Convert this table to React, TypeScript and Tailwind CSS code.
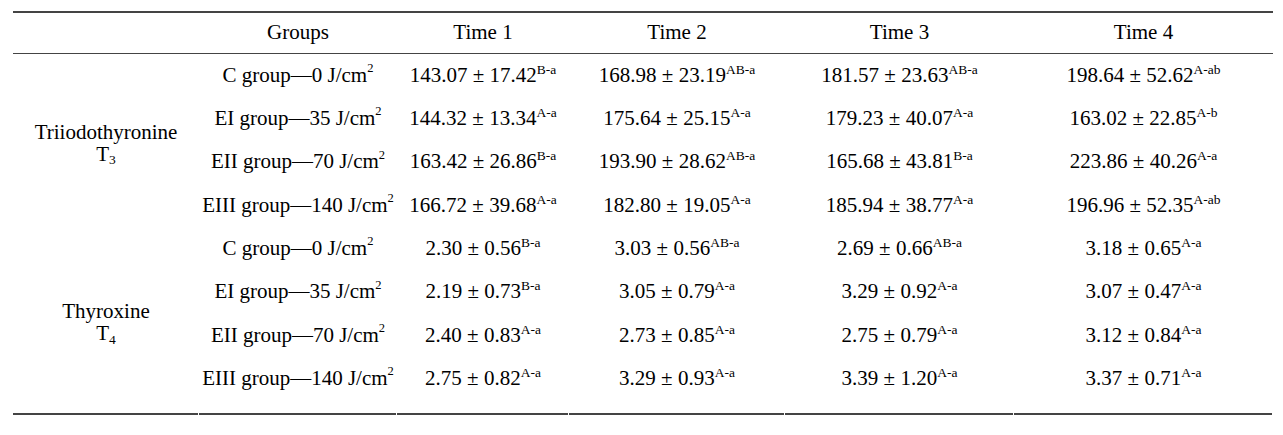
const groups = [
  "C group\u20140 J/cm",
  "EI group\u201435 J/cm",
  "EII group\u201470 J/cm",
  "EIII group\u2014140 J/cm",
];

type Cell = [string, string];

const t3: Cell[][] = [
  [["143.07 ± 17.42", "B-a"], ["168.98 ± 23.19", "AB-a"], ["181.57 ± 23.63", "AB-a"], ["198.64 ± 52.62", "A-ab"]],
  [["144.32 ± 13.34", "A-a"], ["175.64 ± 25.15", "A-a"], ["179.23 ± 40.07", "A-a"], ["163.02 ± 22.85", "A-b"]],
  [["163.42 ± 26.86", "B-a"], ["193.90 ± 28.62", "AB-a"], ["165.68 ± 43.81", "B-a"], ["223.86 ± 40.26", "A-a"]],
  [["166.72 ± 39.68", "A-a"], ["182.80 ± 19.05", "A-a"], ["185.94 ± 38.77", "A-a"], ["196.96 ± 52.35", "A-ab"]],
];

const t4: Cell[][] = [
  [["2.30 ± 0.56", "B-a"], ["3.03 ± 0.56", "AB-a"], ["2.69 ± 0.66", "AB-a"], ["3.18 ± 0.65", "A-a"]],
  [["2.19 ± 0.73", "B-a"], ["3.05 ± 0.79", "A-a"], ["3.29 ± 0.92", "A-a"], ["3.07 ± 0.47", "A-a"]],
  [["2.40 ± 0.83", "A-a"], ["2.73 ± 0.85", "A-a"], ["2.75 ± 0.79", "A-a"], ["3.12 ± 0.84", "A-a"]],
  [["2.75 ± 0.82", "A-a"], ["3.29 ± 0.93", "A-a"], ["3.39 ± 1.20", "A-a"], ["3.37 ± 0.71", "A-a"]],
];

const Value = ({ v }: { v: Cell }) => (
  <span className="whitespace-nowrap">
    {v[0]}
    <sup className="text-[13.5px] top-[-0.6em]">{v[1]}</sup>
  </span>
);

const Block = ({ label, sub, data, last }: { label: string; sub: string; data: Cell[][]; last?: boolean }) => (
  <>
    <div className="row-span-4 flex flex-col items-center justify-center leading-[22px] pt-[4px]">
      <span>{label}</span>
      <span>
        T<sub className="text-[13.5px]">{sub}</sub>
      </span>
    </div>
    {data.map((row, i) => {
      const h = last && i === 3 ? "h-[56px] pb-[12.7px]" : "h-[43.3px]";
      return (
        <div key={i} className="contents">
          <div className={`${h} flex items-center justify-center whitespace-nowrap`}>
            {groups[i]}
            <sup className="text-[12.5px] top-[-0.6em]">2</sup>
          </div>
          {row.map((v, j) => (
            <div key={j} className={`${h} flex items-center justify-center`}>
              <Value v={v} />
            </div>
          ))}
        </div>
      );
    })}
  </>
);

const App = () => {
  return (
    <div className="w-[1283px] h-[435px] bg-white pt-[11px] pl-[13px] text-[21px] text-black font-[family-name:'Liberation_Serif',serif]">
      <div className="w-[1260px] border-t-2 border-[#444]">
        <div className="grid grid-cols-[186px_198px_172px_216px_229px_259px] h-[41px] border-b border-[#444] items-center text-center">
          <div />
          <div>Groups</div>
          <div>Time 1</div>
          <div>Time 2</div>
          <div>Time 3</div>
          <div>Time 4</div>
        </div>
        <div className="grid grid-cols-[186px_198px_172px_216px_229px_259px]">
          <Block label="Triiodothyronine" sub="3" data={t3} />
          <Block label="Thyroxine" sub="4" data={t4} last />
          {[0, 1, 2, 3, 4, 5].map((k) => (
            <div key={k} className="h-[2px] bg-[#444] mr-px" />
          ))}
        </div>
      </div>
    </div>
  );
};

export default App;
